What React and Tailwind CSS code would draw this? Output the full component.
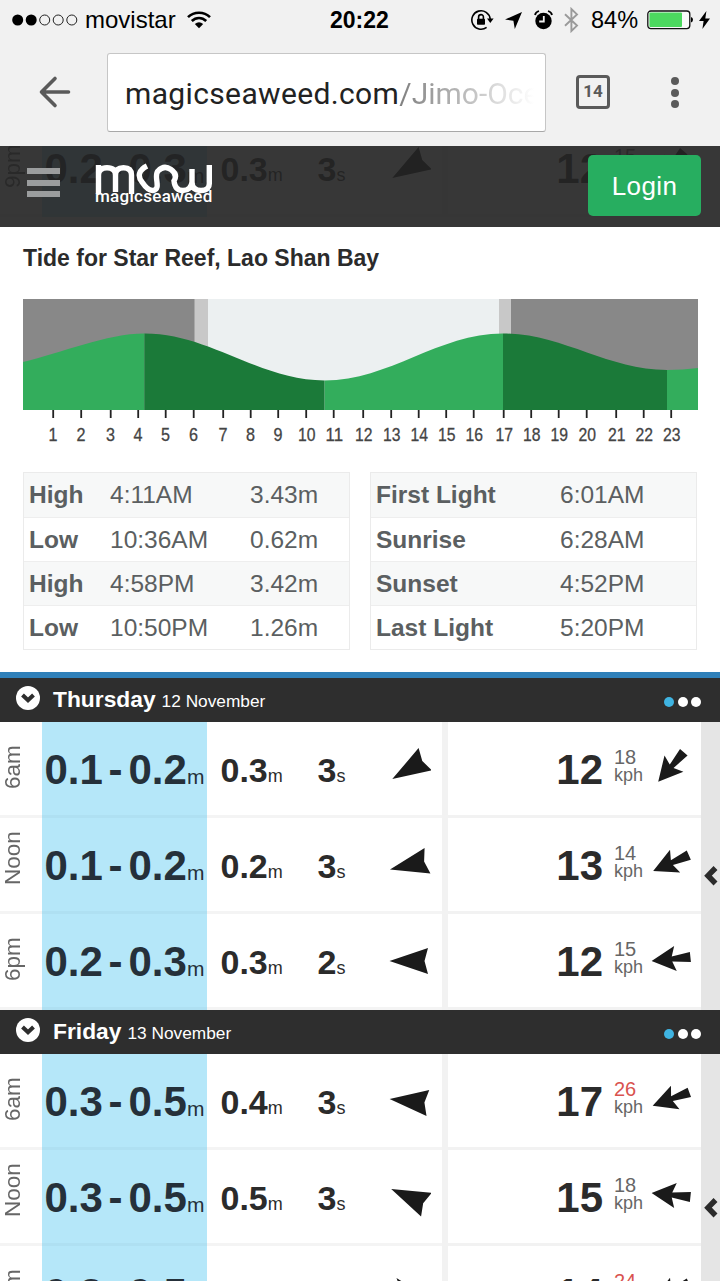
const thursday = [
    { time: '6am', surf: ['0.1', '0.2'], swell: '0.3', period: 3, swellDir: -31, wind: 12, gust: 18, windDir: -49 },
    { time: 'Noon', surf: ['0.1', '0.2'], swell: '0.2', period: 3, swellDir: -13, wind: 13, gust: 14, windDir: -24 },
    { time: '6pm', surf: ['0.2', '0.3'], swell: '0.3', period: 2, swellDir: 0, wind: 12, gust: 15, windDir: -6 },
];

const friday = [
    { time: '6am', surf: ['0.3', '0.5'], swell: '0.4', period: 3, swellDir: 6, wind: 17, gust: 26, windDir: -20 },
    { time: 'Noon', surf: ['0.3', '0.5'], swell: '0.5', period: 3, swellDir: 24, wind: 15, gust: 18, windDir: 6 },
    { time: '6pm', surf: ['0.3', '0.5'], swell: '0.5', period: 3, swellDir: 50, wind: 14, gust: 24, windDir: -24 },
];

const wednesdayNight = { time: '9pm', surf: ['0.2', '0.3'], swell: '0.3', period: 3, swellDir: -31, wind: 12, gust: 15, windDir: -49 };

const tides = [
    ['High', '4:11AM', '3.43m'],
    ['Low', '10:36AM', '0.62m'],
    ['High', '4:58PM', '3.42m'],
    ['Low', '10:50PM', '1.26m'],
];

const light = [
    ['First Light', '6:01AM'],
    ['Sunrise', '6:28AM'],
    ['Sunset', '4:52PM'],
    ['Last Light', '5:20PM'],
];

// tick x positions for hours 1 - 23
const ticks = [30, 58, 87.5, 115, 142.5, 170.5, 200, 227.5, 255, 283, 310.5, 340, 368, 395.5, 423, 450.5, 480.5, 508, 535.5, 563.5, 593, 620.5, 648];

const StatusBar = () => (
    <div className="h-10 flex items-center pl-3 pr-2 text-black text-[24px] leading-none">
        <svg width="66" height="12" viewBox="0 0 66 12" className="shrink-0">
            <circle cx="5.7" cy="6" r="5.5" />
            <circle cx="19.2" cy="6" r="5.5" />
            {[32.7, 46.2, 59.8].map((x) => (
                <circle key={x} cx={x} cy="6" r="5" fill="none" stroke="#222" strokeWidth="1" />
            ))}
        </svg>
        <span className="ml-[7px] w-[102px]">movistar</span>
        <svg width="24" height="18" viewBox="0 0 24 18" className="shrink-0" fill="none" stroke="#000">
            <path d="M1 6.2C7 .2 17 .2 23 6.2" strokeWidth="2.6" />
            <path d="M4.8 10C9 5.9 15 5.9 19.2 10" strokeWidth="2.6" />
            <path d="M12 17.2L7.8 13Q12 9.4 16.2 13Z" fill="#000" stroke="none" />
        </svg>
        <span className="ml-[119px] w-[141px] font-bold text-[23px]">20:22</span>
        <svg width="23" height="22" viewBox="0 0 23 22" className="shrink-0" fill="none" stroke="#000" strokeWidth="1.6">
            <path d="M15.6 18.3A9.2 9.2 0 1 1 19.2 10" />
            <path d="M16 9.5h6.6l-3.3 4.6z" fill="#000" stroke="none" />
            <rect x="6" y="9.8" width="8" height="6" rx=".8" fill="#000" stroke="none" />
            <path d="M7.6 10V8a2.4 2.4 0 0 1 4.8 0v2" />
        </svg>
        <svg width="17" height="17" viewBox="0 0 17 17" className="shrink-0 ml-[11px]">
            <path d="M17 0L9.8 17 8.4 8.8 0 7.6z" />
        </svg>
        <svg width="19" height="20" viewBox="0 0 19 20" className="shrink-0 ml-3">
            <circle cx="9.5" cy="11" r="8.2" />
            <path d="M1 5Q1.6 2 5 1M18 5Q17.4 2 14 1" fill="none" stroke="#000" strokeWidth="1.8" />
            <path d="M9.8 6v5.5H5.2" fill="none" stroke="#f1f1f1" strokeWidth="1.8" />
        </svg>
        <svg width="15" height="26" viewBox="0 0 15 26" className="shrink-0 ml-[11px]" fill="none" stroke="#9a9a9a" strokeWidth="1.9">
            <path d="M1 7.2L13 18.6 7.4 24V2L13 7.4 1 18.8" />
        </svg>
        <span className="ml-3 pt-px w-[56px] text-[23.500px]">84%</span>
        <svg width="46" height="20" viewBox="0 0 46 20" className="shrink-0">
            <rect x=".8" y="1" width="42" height="17.6" rx="3" fill="#fafafa" stroke="#111" strokeWidth="1.3" />
            <rect x="2.4" y="2.6" width="32.6" height="14.4" rx="1" fill="#4cd95f" />
            <path d="M44 7q2 .5 2 2.8T44 12.6z" />
        </svg>
        <svg width="11" height="18" viewBox="0 0 11 18" className="shrink-0 ml-[6px]">
            <path d="M7.4 0L0 10h4.6L3.4 18 11 7.5H6.3z" />
        </svg>
    </div>
);

const BrowserBar = () => (
    <div className="h-[106px] pt-[13px] flex items-start">
        <svg width="34" height="34" viewBox="0 0 34 34" className="shrink-0 ml-[37px] mt-[22px]" fill="none" stroke="#5a5a5a" strokeWidth="3.6" strokeLinecap="round" strokeLinejoin="round">
            <path d="M31.5 17H4.5M18 3.5L4.5 17 18 30.5" />
        </svg>
        <div className="ml-[36px] w-[439px] h-[79px] bg-white border border-[#c6c6c6] border-b-[#a8a8a8] rounded-[3px] pl-[17px] overflow-hidden whitespace-nowrap font-[Roboto,sans-serif] text-[30px] tracking-[0.360px] leading-[79px] text-[#222]">
            magicseaweed.com
            <span className="tracking-normal bg-linear-to-r from-[#808080] to-white to-[135px] bg-clip-text text-transparent">/Jimo-Oce</span>
        </div>
        <div className="ml-[30px] mt-[22px] w-[34px] h-[34px] border-[3.500px] border-[#5a5a5a] rounded-[4px] text-center font-[Roboto,sans-serif] font-bold text-[17px] leading-[27px] text-[#5a5a5a]">
            14
        </div>
        <div className="ml-[61px] mt-[24px] flex flex-col gap-[3.500px]">
            <span className="size-2 rounded-full bg-[#5a5a5a]" />
            <span className="size-2 rounded-full bg-[#5a5a5a]" />
            <span className="size-2 rounded-full bg-[#5a5a5a]" />
        </div>
    </div>
);

const Logo = () => (
    <div className="w-[118px] h-[46px] relative">
        <svg width="118" height="34" viewBox="0 0 118 34" fill="none" stroke="#fff" strokeWidth="5.4" className="block">
            <path d="M3.5 31V2M3.5 12Q3.5 4.7 12 4.7T20.5 12V29M20.5 12Q20.5 4.7 28.500 4.7T36.500 12V31" />
            <path d="M52 3C44 7 42 13 47 19Q53 28 58 27.500C67 26 58 13 63 8Q69 1.5 76 6.5T79 18Q80 27.5 88 27.5T97 19V6M97 19Q97 27.5 106 27.5T114.3 19V2" />
        </svg>
        <div className="absolute left-0 top-[23px] font-[Roboto,sans-serif] font-medium text-[17px] leading-5 tracking-[0.280px] text-white">
            magicseaweed
        </div>
    </div>
);

const ForecastRow = ({ row }) => (
    <div className="flex h-24 text-[#2b2b2b] leading-[95px] whitespace-nowrap">
        <div className="w-[42px] h-24 shrink-0 border-b-[3px] border-[#f4f4f4]">
            <div className="[writing-mode:vertical-rl] rotate-180 h-[67px] w-[26px] leading-[26px] text-[22.500px] text-[#666]">{row.time}</div>
        </div>
        <div className="w-[165px] h-24 shrink-0 bg-[#b5e7f9] border-b-[3px] border-[#afe0f2] pl-[2.500px] flex text-[42px] font-bold text-[#25303a]">
            <span className="w-[58px]">{row.surf[0]}</span>
            <span className="w-[26px] text-center">-</span>
            <span>{row.surf[1]}</span>
            <span className="text-[21px] font-normal leading-[109px]">m</span>
        </div>
        <div className="w-[235px] h-24 shrink-0 border-b-[3px] border-[#f4f4f4] flex text-[34px] font-bold leading-[97px]">
            <div className="w-[97px] pl-[13.500px] flex">
                {row.swell}
                <span className="text-[18px] font-normal leading-[108px]">m</span>
            </div>
            <div className="w-[83px] pl-[13.500px] flex">
                {row.period}
                <span className="text-[18px] font-normal leading-[108px]">s</span>
            </div>
            <svg width="44" height="44" viewBox="-22 -22 44 44" className="mt-[25px]" fill="#1a1a1a">
                <path d="M-19.5 0L19 -13 15.5 0 19 13z" transform={`rotate(${row.swellDir})`} />
            </svg>
        </div>
        <div className="w-[259px] h-24 shrink-0 border-b-[3px] border-l-[6px] border-[#f2f2f2] flex">
            <div className="w-[155px] text-right text-[42px] font-bold">{row.wind}</div>
            <div className="w-[46px] pl-[11px] pt-[25px] text-[#666]">
                <div className={`text-[20px] leading-5 ${row.gust > 20 ? 'text-[#d9534f]' : ''}`}>{row.gust}</div>
                <div className="text-[18px] leading-[17px]">kph</div>
            </div>
            <svg width="44" height="44" viewBox="-22 -22 44 44" className="mt-[23px] shrink-0" fill="#1a1a1a">
                <path d="M-19.5 0L4.5 -12.5 1 -2.500 19.500 -5V5L1 2.500 4.5 12.5z" transform={`rotate(${row.windDir})`} />
            </svg>
        </div>
    </div>
);

const Day = ({ name, date, rows }) => (
    <section>
        <header className="h-11 bg-[#2e2e2e] flex items-start pl-4 text-white">
            <svg width="24" height="24" viewBox="0 0 24 24" className="mt-2">
                <circle cx="12" cy="12" r="12" fill="#fff" />
                <path d="M6.5 9L12 14.3 17.5 9" fill="none" stroke="#2e2e2e" strokeWidth="4" />
            </svg>
            <h2 className="ml-[13px] leading-[42px] text-[17.300px] flex-1">
                <span className="font-bold text-[22.800px] mr-[6px]">{name}</span>
                {date}
            </h2>
            <div className="flex gap-[3.500px] mt-[19px] mr-[19px]">
                <span className="size-[10px] rounded-full bg-[#3fb4e2]" />
                <span className="size-[10px] rounded-full bg-white" />
                <span className="size-[10px] rounded-full bg-white" />
            </div>
        </header>
        <div className="flex">
            <div className="w-[701px]">
                {rows.map((row) => (
                    <ForecastRow key={row.time} row={row} />
                ))}
            </div>
            <div className="flex-1 bg-[#e5e5e5] pt-[144px] pl-[3px]">
                <svg width="14" height="20" viewBox="0 0 14 20" fill="none" stroke="#2b2b2b" strokeWidth="5.5">
                    <path d="M11.5 2L4 9.7 11.5 17.5" />
                </svg>
            </div>
        </div>
    </section>
);

const TideChart = () => (
    <svg width="676" height="150" viewBox="0 0 676 150" className="block">
        <rect width="675" height="111" fill="#ecf0f1" />
        <rect width="185" height="111" fill="#c8c8c8" />
        <rect width="171.5" height="111" fill="#888" />
        <rect x="476" width="199" height="111" fill="#c8c8c8" />
        <rect x="488" width="187" height="111" fill="#888" />
        {/* rising tide */}
        <path d="M0 63C38 54 84 34.5 121.5 34.5V111H0z" fill="#33ad5c" />
        <path d="M301.5 81.5C366.5 81.5 415 34.5 480 34.5V111H301.5z" fill="#33ad5c" />
        <path d="M644 71Q660 71 675 69V111H644z" fill="#33ad5c" />
        {/* falling tide */}
        <path d="M121.5 34.5C187 34.5 236 81.5 301.5 81.5V111H121.5z" fill="#1b7a39" />
        <path d="M480 34.5C539.5 34.5 584 71 644 71V111H480z" fill="#1b7a39" />
        {ticks.map((x, i) => (
            <g key={x}>
                <rect x={x - 0.7} y="111" width="1.8" height="8" fill="#222" />
                <text
                    x={i < 9 ? x : x + 0.8}
                    y="142"
                    textAnchor="middle"
                    fontSize="18.5"
                    fill="#444"
                    stroke="#444"
                    strokeWidth=".3"
                    textLength={i < 9 ? 9 : 17.5}
                    lengthAdjust="spacingAndGlyphs"
                >
                    {i + 1}
                </text>
            </g>
        ))}
    </svg>
);

const DataTable = ({ rows, className, columns }) => (
    <div className={`border border-[#ebebeb] text-[24.500px] leading-[44px] text-[#5b5f61] ${className}`}>
        {rows.map((cells, i) => (
            <div key={i} className={`grid h-11 pl-[5px] border-t border-[#eee] first:border-t-0 odd:bg-[#f7f8f8] ${columns}`}>
                {cells.map((cell, j) => (
                    <span key={j} className="h-[43px] first:font-bold">{cell}</span>
                ))}
            </div>
        ))}
    </div>
);

export default function App() {
    return (
        <div className="w-[720px] h-[1281px] overflow-hidden bg-white font-['Liberation_Sans',Arial,sans-serif]">
            <div className="h-[146px] bg-[#f1f1f1]">
                <StatusBar />
                <BrowserBar />
            </div>

            {/* Translucent nav, scrolled forecast shows through */}
            <nav className="relative h-[81px] overflow-hidden">
                <div className="absolute -top-[25px] left-0">
                    <ForecastRow row={wednesdayNight} />
                </div>
                <div className="relative h-full bg-[#232323]/91 flex items-start">
                    <div className="ml-[27px] mt-[22px] flex flex-col gap-[5.500px]">
                        <span className="w-[33px] h-[6px] bg-[#9b9d9e]" />
                        <span className="w-[33px] h-[6px] bg-[#9b9d9e]" />
                        <span className="w-[33px] h-[6px] bg-[#9b9d9e]" />
                    </div>
                    <div className="ml-[35px] mt-[17px] flex-1">
                        <Logo />
                    </div>
                    <button className="mt-[9px] mr-[19px] pt-[2px] w-[113px] h-[61px] rounded-[5px] bg-[#27ae60] text-white text-[26px] tracking-[0.400px]">Login</button>
                </div>
            </nav>

            <main>
                <div className="h-[445px] pl-[23px]">
                    <h1 className="pt-[16px] h-[72px] text-[23px] leading-[30px] font-bold text-[#2b2b2b]">Tide for Star Reef, Lao Shan Bay</h1>
                    <TideChart />
                    <div className="flex gap-5 mt-[23px]">
                        <DataTable rows={tides} className="w-[327px]" columns="grid-cols-[81px_140px_1fr]" />
                        <DataTable rows={light} className="w-[327px]" columns="grid-cols-[184px_1fr]" />
                    </div>
                </div>
                <div className="h-[6px] bg-[#2f80b9]" />
                <Day name="Thursday" date="12 November" rows={thursday} />
                <Day name="Friday" date="13 November" rows={friday} />
            </main>
        </div>
    );
}
